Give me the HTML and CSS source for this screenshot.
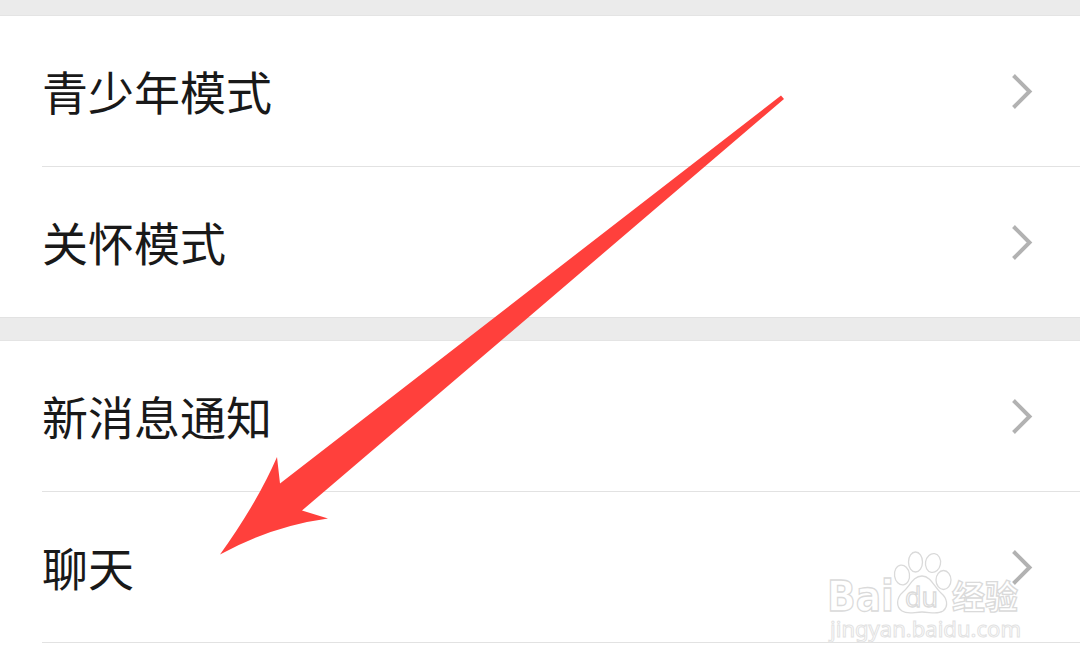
FILE: index.html
```
<!DOCTYPE html>
<html lang="zh-CN">
<head>
    <meta charset="UTF-8">
    <meta name="viewport" content="width=device-width, initial-scale=1.0">
    <title>设置</title>
    <link rel="stylesheet" href="styles.css">
</head>
<body>
    <ul class="group">
        <li class="item">
            <span>青少年模式</span>
            <svg class="chevron" viewBox="0 0 22 36"><path d="M2.500 2.500 L18.500 18.500 L2.500 34.500"/></svg>
        </li>
        <li class="item">
            <span>关怀模式</span>
            <svg class="chevron" viewBox="0 0 22 36"><path d="M2.500 2.500 L18.500 18.500 L2.500 34.500"/></svg>
        </li>
    </ul>
    <ul class="group">
        <li class="item">
            <span>新消息通知</span>
            <svg class="chevron" viewBox="0 0 22 36"><path d="M2.500 2.500 L18.500 18.500 L2.500 34.500"/></svg>
        </li>
        <li class="item">
            <span>聊天</span>
            <svg class="chevron" viewBox="0 0 22 36"><path d="M2.500 2.500 L18.500 18.500 L2.500 34.500"/></svg>
        </li>
    </ul>

    <!-- arrow pointing at 聊天 -->
    <svg class="arrow" viewBox="0 0 1080 667">
        <path d="M781 95.5 L784 99 L302 510.500 L328 518.500 Q272 526 220 554.500 Q257 503 277 457 L280 483.500 Z"/>
    </svg>

    <svg class="watermark" viewBox="0 0 210 100">
        <text class="brand" x="7" y="66" textLength="67" lengthAdjust="spacingAndGlyphs">Bai</text>
        <ellipse cx="82" cy="30" rx="7.500" ry="10" transform="rotate(-8 82 30)"/>
        <ellipse cx="95.500" cy="17" rx="7" ry="10"/>
        <ellipse cx="113" cy="18" rx="7.500" ry="9.500" transform="rotate(10 113 18)"/>
        <ellipse cx="123.500" cy="35" rx="7.500" ry="9.500"/>
        <path d="M102 31 C93 31 90 41 83 47 C76 53 76 62 82 66 C88 70 94 67 102 67 C110 67 117 70 123 66 C129 61 127 53 121 48 C114 42 111 31 102 31 Z"/>
        <text class="du" x="85" y="62" textLength="33" lengthAdjust="spacingAndGlyphs">du</text>
        <text class="cn" x="132" y="64" textLength="66" lengthAdjust="spacingAndGlyphs">经验</text>
        <text class="site" x="10" y="92" textLength="191" lengthAdjust="spacingAndGlyphs">jingyan.baidu.com</text>
    </svg>
</body>
</html>
```
FILE: styles.css
```
body {
    margin: 0;
    padding-top: 15px;
    height: 667px;
    box-sizing: border-box;
    overflow: hidden;
    position: relative;
    background: linear-gradient(#ebebeb 360px, #fff 360px);
    font-family: "Noto Sans CJK SC", sans-serif;
    color: #191919;
}
.group {
    margin: 0 0 22px;
    padding: 0 0 0 42px;
    list-style: none;
    background: #fff;
    border-top: 1px solid #e4e4e4;
}
.group:first-child {
    border-bottom: 1px solid #e2e2e2;
}
.item {
    display: flex;
    justify-content: space-between;
    align-items: center;
    height: 150px;
    padding-right: 47px;
    border-bottom: 1px solid #e2e2e2;
    font-size: 46px;
    line-height: 66px;
}
.item span {
    padding-bottom: 2px;
}
.group:first-child .item:last-child {
    border-bottom: none;
}
.chevron {
    position: relative;
    z-index: 2;
    width: 22px;
    height: 36px;
    overflow: visible;
    fill: none;
    stroke: #b2b2b2;
    stroke-width: 4;
}
.arrow {
    position: absolute;
    left: 0;
    top: 0;
    width: 1080px;
    height: 667px;
    fill: #ff403c;
}
.watermark {
    position: absolute;
    left: 820px;
    top: 545px;
    width: 210px;
    height: 100px;
    fill: #fff;
    stroke: #dadada;
    stroke-width: 1.3;
    font-family: "DejaVu Sans", sans-serif;
}
.brand {
    font-size: 42px;
    font-weight: bold;
}
.du {
    font-family: "Open Sans", sans-serif;
    font-size: 27px;
}
.cn {
    font-family: "Noto Sans CJK SC", sans-serif;
    font-size: 33px;
    font-weight: bold;
}
.site {
    font-family: "Noto Sans", sans-serif;
    font-size: 22px;
    stroke: #e2e2e2;
    stroke-width: 1;
}
```
